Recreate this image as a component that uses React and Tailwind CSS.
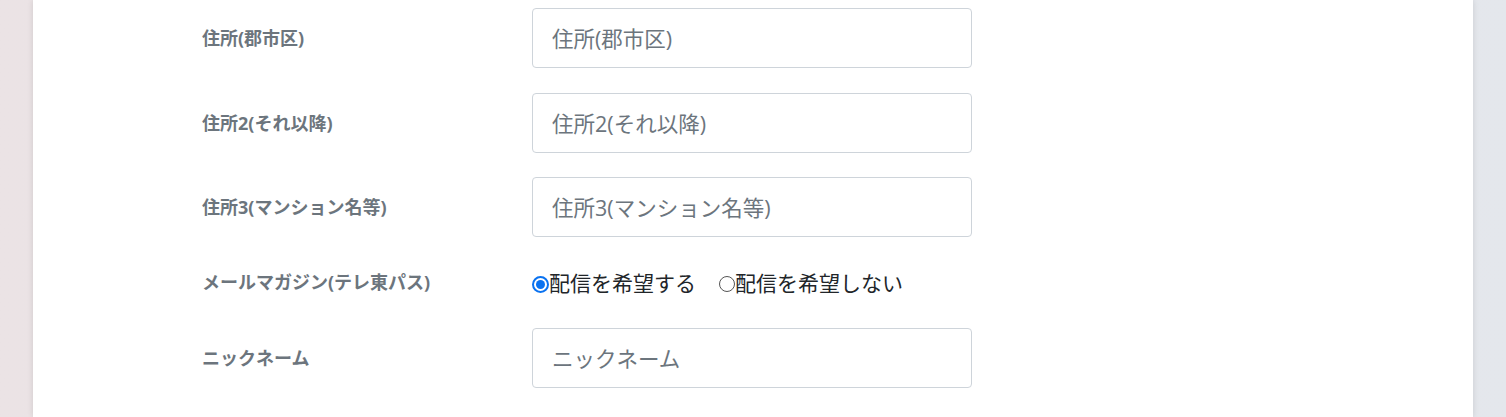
import { useState } from 'react'

const fieldFont = { fontFamily: '"Open Sans", "Noto Sans CJK JP", sans-serif' }

function TextRow({ label, placeholder, className = '' }) {
  return (
    <div className={`flex items-center ${className}`}>
      <label className="w-[330px] shrink-0 text-[18px] font-bold text-[#6c757d]">{label}</label>
      <input
        type="text"
        placeholder={placeholder}
        className="w-[440px] h-[60px] rounded-[4px] border border-[#ced4da] bg-white px-[19px] text-[21.5px] text-[#212529] placeholder:text-[#6c757d] outline-none"
      />
    </div>
  )
}

function Radio({ checked, onChange, children, className = '' }) {
  return (
    <label className={`flex items-center cursor-pointer ${className}`} onClick={onChange}>
      {checked ? (
        <span className="w-[17px] h-[17px] rounded-full border-2 border-[#0a72f0] flex items-center justify-center shrink-0">
          <span className="w-[9px] h-[9px] rounded-full bg-[#0a72f0]" />
        </span>
      ) : (
        <span className="w-[16px] h-[16px] rounded-full border border-[#555] shrink-0" />
      )}
      <span>{children}</span>
    </label>
  )
}

export default function App() {
  const [mail, setMail] = useState('yes')

  return (
    <div className="h-[417px] overflow-hidden bg-gradient-to-r from-[#ebe3e5] to-[#e4e7ec]" style={fieldFont}>
      <div className="mx-auto w-[1440px] h-full bg-white shadow-[0_0_6px_rgba(0,0,0,0.12)] pl-[169px] pt-[8px]">
        <TextRow label="住所(郡市区)" placeholder="住所(郡市区)" />
        <TextRow label="住所2(それ以降)" placeholder="住所2(それ以降)" className="mt-[25px]" />
        <TextRow label="住所3(マンション名等)" placeholder="住所3(マンション名等)" className="mt-[24px]" />

        <div className="flex items-center mt-[26px] h-[42px]">
          <label className="w-[330px] shrink-0 text-[18px] font-bold text-[#6c757d] -mt-[4px]">メールマガジン(テレ東パス)</label>
          <div className="flex items-center text-[21px] text-[#212529]">
            <Radio checked={mail === 'yes'} onChange={() => setMail('yes')} className="mr-[23px]">
              配信を希望する
            </Radio>
            <Radio checked={mail === 'no'} onChange={() => setMail('no')}>
              配信を希望しない
            </Radio>
          </div>
        </div>

        <TextRow label="ニックネーム" placeholder="ニックネーム" className="mt-[23px]" />
      </div>
    </div>
  )
}
